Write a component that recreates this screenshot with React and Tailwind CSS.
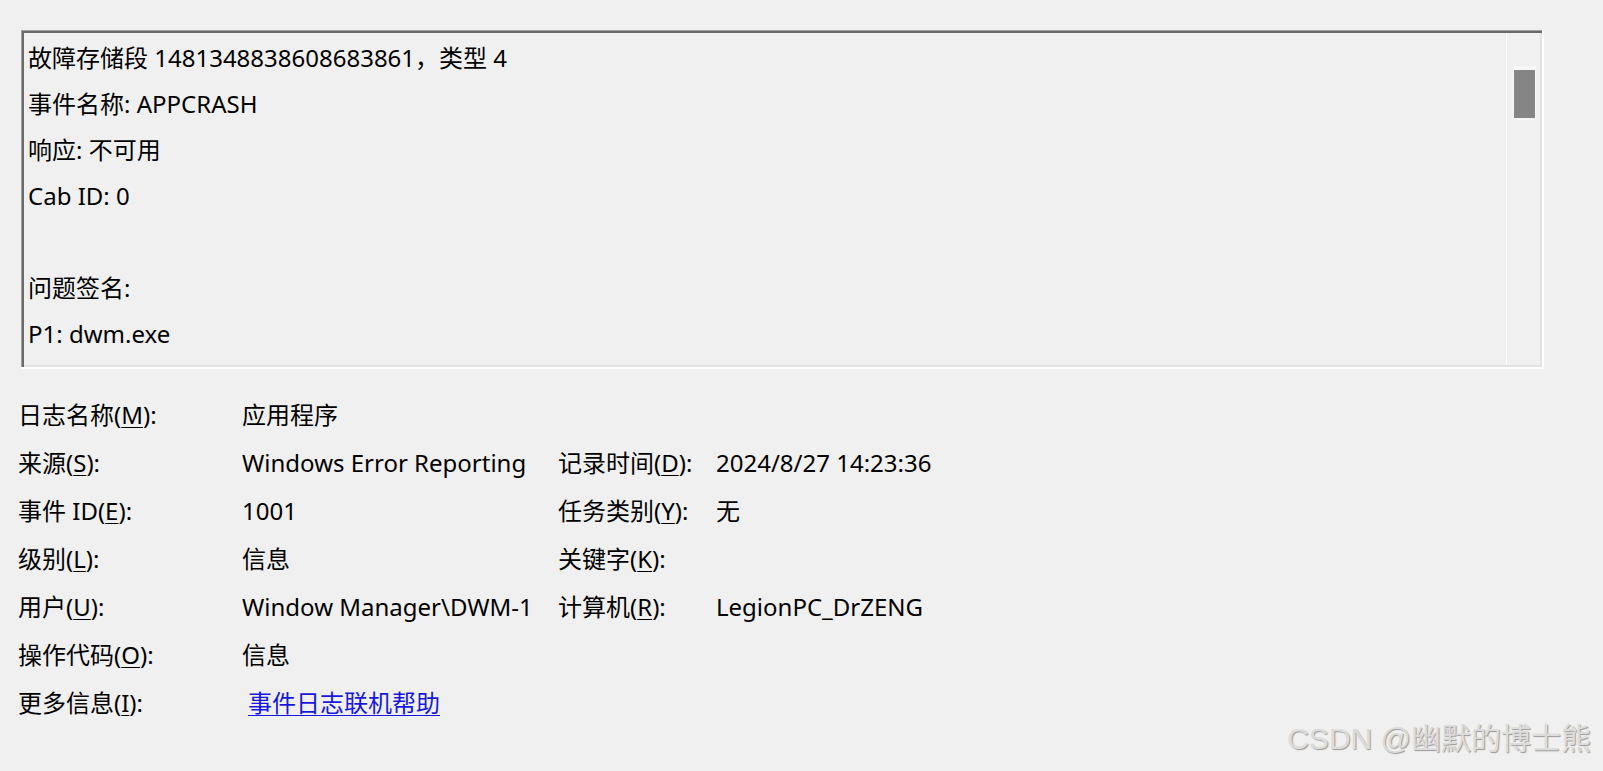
import React from "react";

const font = { fontFamily: '"Noto Sans", "Noto Sans CJK SC", sans-serif' };

function Label({ text, k, after }) {
  return (
    <span>
      {text}(<span className="underline underline-offset-[3px] decoration-1">{k}</span>){after ?? ":"}
    </span>
  );
}

export default function App() {
  const lines = [
    "故障存储段 1481348838608683861，类型 4",
    "事件名称: APPCRASH",
    "响应: 不可用",
    "Cab ID: 0",
    "",
    "问题签名:",
    "P1: dwm.exe",
  ];
  return (
    <div
      className="w-[1603px] h-[771px] bg-[#f0f0f0] text-black overflow-hidden relative"
      style={font}
    >
      <div className="pt-[30px] pl-[21px]">
        <div className="w-[1523px] h-[339px] border-r-2 border-b-2 border-white">
          <div className="h-full border-t border-l border-[#a0a0a0]">
            <div className="h-full border-t-2 border-l-2 border-[#6a6a6a] flex">
              <div className="flex-1 h-full border-b-2 border-[#e3e3e3] flex">
                <div className="flex-1 pl-[4px] pt-[2px] text-[24px] leading-[46px] overflow-hidden">
                  {lines.map((l, i) => (
                    <div key={i} className="h-[46px] whitespace-pre">
                      {l}
                    </div>
                  ))}
                </div>
                <div className="w-[36px] h-full border-l border-white border-r-2 border-r-[#e3e3e3] pt-[33px] pl-[6px]">
                  <div className="w-[23px] h-[54px] bg-[#f7f7f7] px-[1px] py-[4px]">
                    <div className="w-[21px] h-[48px] bg-[#858585]" />
                  </div>
                </div>
              </div>
            </div>
          </div>
        </div>
      </div>

      <div className="pl-[18px] pt-[22px] text-[24px] leading-[48px] grid grid-cols-[224px_316px_158px_400px]">
        <div><Label text="日志名称" k="M" /></div>
        <div>应用程序</div>
        <div></div>
        <div></div>

        <div><Label text="来源" k="S" /></div>
        <div className="whitespace-nowrap">Windows Error Reporting</div>
        <div><Label text="记录时间" k="D" /></div>
        <div>2024/8/27 14:23:36</div>

        <div><Label text="事件 ID" k="E" /></div>
        <div>1001</div>
        <div><Label text="任务类别" k="Y" /></div>
        <div>无</div>

        <div><Label text="级别" k="L" /></div>
        <div>信息</div>
        <div><Label text="关键字" k="K" /></div>
        <div></div>

        <div><Label text="用户" k="U" /></div>
        <div className="whitespace-nowrap">Window Manager\DWM-1</div>
        <div><Label text="计算机" k="R" /></div>
        <div>LegionPC_DrZENG</div>

        <div><Label text="操作代码" k="O" /></div>
        <div>信息</div>
        <div></div>
        <div></div>

        <div><Label text="更多信息" k="I" /></div>
        <div className="pl-[6px]">
          <a href="#" className="text-[#1818dc] underline underline-offset-[3px] decoration-1">
            事件日志联机帮助
          </a>
        </div>
        <div></div>
        <div></div>
      </div>

      <div
        className="absolute right-[12px] bottom-[10px] text-[30px] text-[#dcdcdc] tracking-[0px]"
        style={{
          fontFamily: '"Liberation Sans", "Noto Sans CJK SC", sans-serif',
          textShadow: "1px 1px 1px #9a9a9a",
        }}
      >
        CSDN @幽默的博士熊
      </div>
    </div>
  );
}
